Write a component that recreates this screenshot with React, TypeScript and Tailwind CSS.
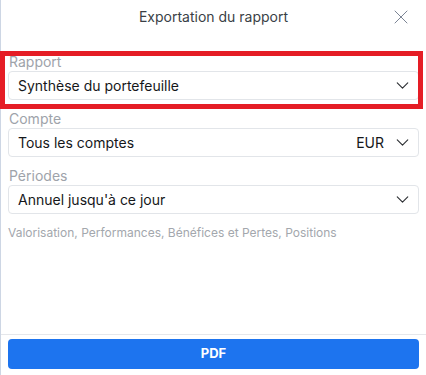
import { ChevronDown, X } from "lucide-react";

function Field({
  label,
  value,
  suffix,
}: {
  label: string;
  value: string;
  suffix?: string;
}) {
  return (
    <div className="flex flex-col">
      <div className="h-[18px] leading-[18px] text-[14px] text-[#9ea3aa] pl-[1px]">
        {label}
      </div>
      <div className="h-[29px] flex items-center justify-between border border-[#e2e5e9] rounded-[4px] pl-[9px] pr-[5px]">
        <span className="text-[14px] text-[#15171a]">{value}</span>
        <div className="flex items-center gap-[8px]">
          {suffix && <span className="text-[14px] text-[#15171a]">{suffix}</span>}
          <ChevronDown size={21} strokeWidth={1.3} className="text-[#2c2f33]" />
        </div>
      </div>
    </div>
  );
}

export default function App() {
  return (
    <div
      className="relative w-[426px] h-[375px] bg-white flex flex-col border-l border-[#cdd6e4]"
      style={{ fontFamily: "Inter, 'Noto Sans', sans-serif" }}
    >
      {/* Header */}
      <div className="relative h-[32px] flex items-center justify-center">
        <span className="text-[14px] text-[#3a3f46]">Exportation du rapport</span>
        <X
          size={24}
          strokeWidth={1}
          className="absolute right-[13px] top-[5px] text-[#7b8494]"
        />
      </div>

      {/* Fields */}
      <div className="flex flex-col gap-[10px] px-[7px] pt-[21px]">
        <Field label="Rapport" value="Synthèse du portefeuille" />
        <Field label="Compte" value="Tous les comptes" suffix="EUR" />
        <Field label="Périodes" value="Annuel jusqu'à ce jour" />
      </div>
      <div className="px-[7px] mt-[11px] text-[12px] leading-[16px] text-[#a3a7ad]">
        Valorisation, Performances, Bénéfices et Pertes, Positions
      </div>

      <div className="flex-1" />

      {/* Footer */}
      <div className="border-t border-[#e5e7eb] px-[7px] pt-[4px] pb-[6px]">
        <button className="w-full h-[30px] rounded-[4px] bg-[#1d74ef] text-white text-[13px] font-bold">
          PDF
        </button>
      </div>

      {/* Highlight */}
      <div className="absolute left-[-1px] top-[51px] w-[423px] h-[58px] border-[5px] border-[#e51d25] pointer-events-none" />
    </div>
  );
}
